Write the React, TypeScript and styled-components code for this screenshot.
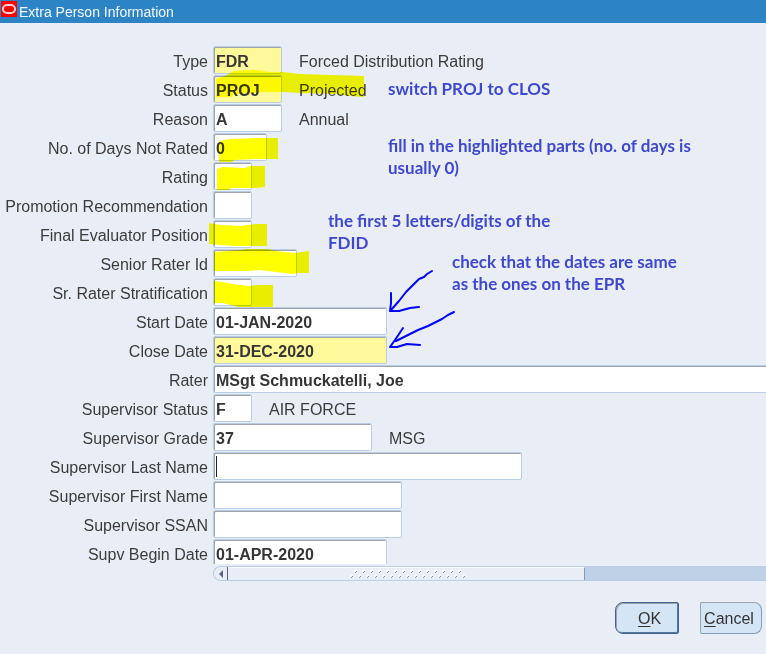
import React from "react";
import styled, { createGlobalStyle, css } from "styled-components";

const GlobalStyle = createGlobalStyle`
  * { box-sizing: border-box; }
  html, body { margin: 0; min-height: 100%; background: #e9eef6; }
  body { overflow: hidden; }
`;

const Window = styled.div`
  position: relative;
  min-height: 100vh;
  background: #e9eef6;
  color: #3c3c3c;
  font-family: "Liberation Sans", Arial, sans-serif;
  font-size: 16px;
`;

const TitleBar = styled.header`
  display: flex;
  align-items: center;
  height: 23px;
  padding-left: 1px;
  gap: 2px;
  background: #2d84c4;
  color: #f2f8fd;
`;

const TitleIcon = styled.svg`
  flex: none;
  align-self: flex-start;
  margin-top: 1px;
`;

const Title = styled.h1`
  margin: 0;
  font-size: 14px;
  font-weight: 400;
  line-height: 22px;
`;

const Form = styled.form`
  padding-top: 23px;
`;

const Rows = styled.div`
  display: flex;
  flex-direction: column;
  gap: 1px;
  height: 518px;
  overflow: hidden;
`;

const Row = styled.div`
  display: grid;
  grid-template-columns: 208px 1fr;
  column-gap: 5px;
  flex: none;
  height: 28px;
`;

const Label = styled.label`
  text-align: right;
  line-height: 32px;
  white-space: nowrap;
`;

const Cell = styled.div`
  display: flex;
  gap: 17px;
  min-width: 0;
`;

const Field = styled.input<{ $width?: number; $required?: boolean; $caret?: boolean }>`
  flex: none;
  width: ${(p) => (p.$width ? `${p.$width}px` : "calc(100% + 4px)")};
  height: 28px;
  padding: 4px 0 0 2px;
  border: 1px solid #b9cde5;
  border-radius: 2px;
  outline: none;
  background-color: ${(p) => (p.$required ? "#fff99c" : "#ffffff")};
  box-shadow: inset 1px 1px 0 #a0a4ac;
  color: #363636;
  font: bold 16px "Liberation Sans", Arial, sans-serif;
  ${(p) =>
    p.$caret &&
    css`
      background-image: linear-gradient(#222, #222);
      background-size: 1px 21px;
      background-position: 2px 3px;
      background-repeat: no-repeat;
    `}
`;

const Description = styled.output`
  line-height: 32px;
  white-space: nowrap;
`;

const ScrollBar = styled.div`
  display: flex;
  height: 15px;
  margin: 2px 0 0 213px;
  border: 1px solid #b9cde5;
  border-right: 0;
  border-radius: 8px 0 0 8px;
  background: #bfd1e7;
  overflow: hidden;
`;

const ScrollArrow = styled.button`
  display: flex;
  align-items: center;
  justify-content: center;
  width: 14px;
  padding: 0;
  border: 0;
  border-right: 1px solid #5c6480;
  background: #e9eef6;
`;

const ScrollThumb = styled.div`
  display: flex;
  justify-content: center;
  width: 357px;
  padding-left: 5px;
  border-top: 1px solid #ffffff;
  border-right: 1px solid #7d9cc0;
  background: #e9eef6;
`;

const Actions = styled.div`
  display: flex;
  justify-content: flex-end;
  gap: 21px;
  padding: 21px 4px 0 0;
`;

const Button = styled.button<{ $primary?: boolean }>`
  height: 32px;
  width: ${(p) => (p.$primary ? "64px" : "62px")};
  padding: ${(p) => (p.$primary ? "2px 0 0 5px" : "2px 4px 0 0")};
  background: #d4e5f5;
  border: 1px solid ${(p) => (p.$primary ? "#44648f" : "#7d9cc0")};
  border-top-color: ${(p) => (p.$primary ? "#44648f" : "#9da3ab")};
  border-left-color: ${(p) => (p.$primary ? "#44648f" : "#9da3ab")};
  border-radius: ${(p) => (p.$primary ? "8px 2px 2px 8px" : "2px 8px 8px 2px")};
  box-shadow: ${(p) => (p.$primary ? "inset -1px -1px 0 #54769f, inset 1px 1px 0 #9da3ab" : "none")};
  color: #333;
  font: 16px "Liberation Sans", Arial, sans-serif;
`;

const Key = styled.span`
  text-decoration: underline;
  text-underline-offset: 2px;
  text-decoration-thickness: 1px;
`;

const Highlights = styled.svg`
  position: absolute;
  top: 0;
  left: 0;
  pointer-events: none;
  mix-blend-mode: multiply;
`;

const Arrows = styled.svg`
  position: absolute;
  top: 0;
  left: 0;
  pointer-events: none;
`;

const Note = styled.p<{ $x: number; $y: number }>`
  position: absolute;
  left: ${(p) => p.$x}px;
  top: ${(p) => p.$y}px;
  margin: 0;
  color: #3f48cc;
  font: bold 17px/22px "Lato", "Open Sans", sans-serif;
  white-space: nowrap;
`;

type RowData = {
  label: string;
  value?: string;
  width?: number;
  required?: boolean;
  caret?: boolean;
  description?: string;
};

const rows: RowData[] = [
  { label: "Type", value: "FDR", width: 69, required: true, description: "Forced Distribution Rating" },
  { label: "Status", value: "PROJ", width: 69, required: true, description: "Projected" },
  { label: "Reason", value: "A", width: 69, description: "Annual" },
  { label: "No. of Days Not Rated", value: "0", width: 54 },
  { label: "Rating", width: 39 },
  { label: "Promotion Recommendation", width: 39 },
  { label: "Final Evaluator Position", width: 39 },
  { label: "Senior Rater Id", width: 84 },
  { label: "Sr. Rater Stratification", width: 39 },
  { label: "Start Date", value: "01-JAN-2020", width: 174 },
  { label: "Close Date", value: "31-DEC-2020", width: 174, required: true },
  { label: "Rater", value: "MSgt Schmuckatelli, Joe" },
  { label: "Supervisor Status", value: "F", width: 39, description: "AIR FORCE" },
  { label: "Supervisor Grade", value: "37", width: 159, description: "MSG" },
  { label: "Supervisor Last Name", width: 309, caret: true },
  { label: "Supervisor First Name", width: 189 },
  { label: "Supervisor SSAN", width: 189 },
  { label: "Supv Begin Date", value: "01-APR-2020", width: 174 },
];

const gripDots = Array.from({ length: 29 }, (_, i) => ({ x: 1 + i * 4, y: i % 2 ? 3 : 8 }));

export default function App() {
  return (
    <>
      <GlobalStyle />
      <Window>
        <TitleBar>
          <TitleIcon width="16" height="16" viewBox="0 0 16 16" aria-hidden="true">
            <rect width="16" height="16" fill="#ff0000" />
            <rect x="2" y="4" width="12" height="8" rx="4" fill="none" stroke="#ffd0d0" strokeWidth="2" />
          </TitleIcon>
          <Title>Extra Person Information</Title>
        </TitleBar>
        <Form onSubmit={(e) => e.preventDefault()}>
          <Rows>
            {rows.map((r, i) => (
              <Row key={r.label}>
                <Label htmlFor={`field-${i}`}>{r.label}</Label>
                <Cell>
                  <Field
                    id={`field-${i}`}
                    defaultValue={r.value ?? ""}
                    $width={r.width}
                    $required={r.required}
                    $caret={r.caret}
                  />
                  {r.description && <Description htmlFor={`field-${i}`}>{r.description}</Description>}
                </Cell>
              </Row>
            ))}
          </Rows>
          <ScrollBar>
            <ScrollArrow type="button" aria-label="Scroll left">
              <svg width="4" height="8" viewBox="0 0 4 8" aria-hidden="true">
                <path d="M4 0v8L0 4z" fill="#5c6480" />
              </svg>
            </ScrollArrow>
            <ScrollThumb>
              <svg width="118" height="12" viewBox="0 0 118 12" aria-hidden="true">
                {gripDots.map((d) => (
                  <g key={d.x}>
                    <path d={`M${d.x} ${d.y + 1}v-2h2`} stroke="#fff" fill="none" />
                    <path d={`M${d.x} ${d.y + 2}l2 -2`} stroke="#7794b8" fill="none" />
                  </g>
                ))}
              </svg>
            </ScrollThumb>
          </ScrollBar>
          <Actions>
            <Button type="submit" $primary>
              <Key>O</Key>K
            </Button>
            <Button type="button">
              <Key>C</Key>ancel
            </Button>
          </Actions>
        </Form>

        <Highlights width="766" height="654" viewBox="0 0 766 654" fill="#ffff00" aria-hidden="true">
          <path d="M216 97V79L225 76L234 71L255 70L270 72L283 72L300 74L364 76V97L350 96L336 94L300 93L283 92L266 92L250 93L234 94L231 97Z" />
          <path d="M219 160V141L230 139L256 138H278V159H257L234 160L232 162H219Z" />
          <path d="M217 189V169L223 167L245 168L250 166H265V187L254 188L231 188L229 190H217Z" />
          <path d="M209 244V223L220 225L240 226L256 224H267V246H235L220 245Z" />
          <path d="M214 271V252L241 250L247 249H268L275 251L295 253L309 251V273H300L292 274L276 272L260 270L248 271Z" />
          <path d="M214 303V281L222 282L233 284L248 286L259 285H273V307H239L231 305L222 303Z" />
        </Highlights>
        <Arrows
          width="766"
          height="654"
          viewBox="0 0 766 654"
          fill="none"
          stroke="#0000ff"
          strokeWidth="2"
          strokeLinecap="round"
          strokeLinejoin="round"
          aria-hidden="true"
        >
          <path d="M432 271L427 274L424 277L419 279L414 284L406 292L399 301L391 310" />
          <path d="M391 293V303L390 311H399L410 308L419 307" />
          <path d="M454 312L448 315L442 319L428 326L418 330L408 335L396 341" />
          <path d="M403 328L399 334L395 340L390 347H397L407 344L420 345" />
        </Arrows>
        <Note $x={388} $y={78}>switch PROJ to CLOS</Note>
        <Note $x={388} $y={135}>
          fill in the highlighted parts (no. of days is
          <br />
          usually 0)
        </Note>
        <Note $x={328} $y={210}>
          the first 5 letters/digits of the
          <br />
          FDID
        </Note>
        <Note $x={452} $y={251}>
          check that the dates are same
          <br />
          as the ones on the EPR
        </Note>
      </Window>
    </>
  );
}
